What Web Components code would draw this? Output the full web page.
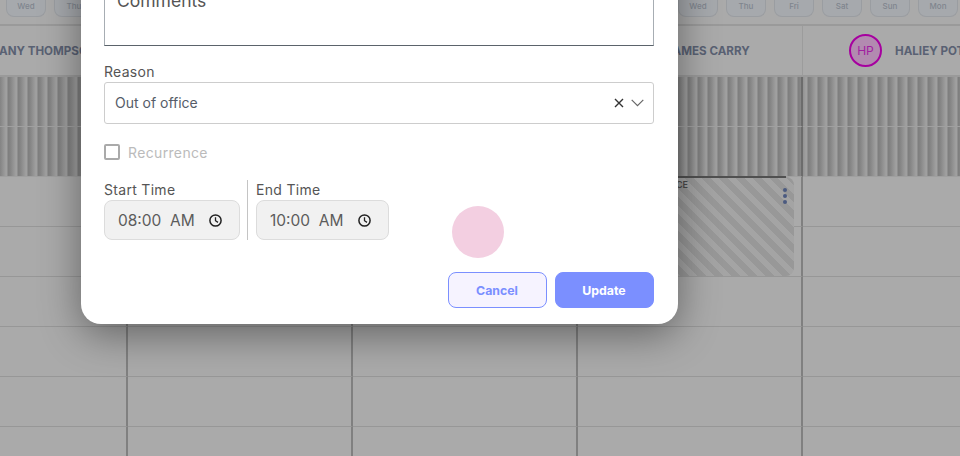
<!DOCTYPE html>
<html><head><meta charset="utf-8">
<style>
html,body{margin:0;padding:0;width:960px;height:456px;overflow:hidden;background:#aaa;font-family:Inter,"Liberation Sans",sans-serif}
</style></head><body>
<template id="t-day"><style>
:host{display:flex;align-items:center;justify-content:center;width:40px;height:17px;flex:none;box-sizing:border-box;padding-bottom:5px;background:#a6a9ad;border:1px solid #9a9da1;border-top:0;border-radius:0 0 8px 8px;font:500 8px Inter,sans-serif;color:#7f858e}
</style><slot></slot></template>

<template id="t-strip"><style>
:host{display:flex;height:26px;box-sizing:border-box;border-bottom:2px solid #9a9a9a;overflow:hidden}
.a,.b{display:flex;gap:8px}
.a{margin-left:6px;width:672px}
</style><div class="a"><slot name="l"></slot></div><div class="b"><slot name="r"></slot></div></template>

<template id="t-cell"><style>
:host{display:block;position:relative;box-sizing:border-box;height:50px;border-bottom:1px solid #979797;border-right:2px solid #808080}
:host([st]){border-bottom:1px solid #a0a0a0;border-right-color:#6c6c6c;background:linear-gradient(90deg,#a0a0a0 0,#a0a0a0 1px,#7e7e7e 2px,#838383 4px,#979797 8px,#a0a0a0 10px) 6px 0/10px 100% fixed}
</style><slot></slot></template>

<template id="t-col"><style>
:host{display:block;flex:none;box-sizing:border-box;width:225px}
:host([first]){width:128px}
.h{height:51px;box-sizing:border-box;border-bottom:2px solid #9a9a9a;border-right:1px solid #9c9c9c;display:flex;align-items:center;gap:13px;padding-left:46px;white-space:nowrap;overflow:hidden;font:700 11.6px Inter,sans-serif;color:#596173}
</style><div class="h"><slot name="head"></slot></div><slot></slot></template>

<template id="t-avatar"><style>
:host{display:flex;align-items:center;justify-content:center;flex:none;box-sizing:border-box;width:33px;height:33px;border:2px solid #a6009f;border-radius:50%;background:#b28ab0;color:#a11ea0;font:400 12px Inter,sans-serif}
</style><slot></slot></template>

<template id="t-event"><style>
:host{position:absolute;left:1px;top:0;width:215px;height:99px;box-sizing:border-box;border-radius:0 8px 8px 0;background:repeating-linear-gradient(45deg,#989898 0,#989898 6px,#a4a4a4 6px,#a4a4a4 12px);color:#4a4a4a;font:600 9px Inter,sans-serif}
.line{position:absolute;left:0;top:-1px;width:207px;height:2px;background:#505050}
.t{position:absolute;right:106px;top:2px;white-space:nowrap}
.d{position:absolute;left:204px;top:11px;display:flex;flex-direction:column;gap:2px}
i{display:block;width:4px;height:4px;border-radius:50%;background:#4b5a80}
</style><div class="line"></div><div class="t"><slot></slot></div><div class="d"><i></i><i></i><i></i></div></template>

<template id="t-field"><style>
:host{display:block;color:#555;font:400 14px/18px Inter,sans-serif;letter-spacing:.3px}
</style><slot></slot></template>

<template id="t-select"><style>
:host{display:flex;align-items:center;box-sizing:border-box;height:42px;margin-top:1px;padding:0 9px 0 10px;border:1px solid #cdcdcd;border-radius:3px;font:400 14px Inter,sans-serif;color:#555c68}
.s{flex:1;padding-bottom:2px}
svg{display:block;flex:none}
</style><div class="s"><slot></slot></div>
<svg width="10" height="10" viewBox="0 0 10 10" style="margin-right:7px"><path d="M1 1L9 9M9 1L1 9" stroke="#333" stroke-width="1.4" fill="none"/></svg>
<svg width="13" height="8" viewBox="0 0 13 8"><path d="M.7.8L6.5 6.6 12.3.8" stroke="#666" stroke-width="1.2" fill="none"/></svg></template>

<template id="t-time"><style>
:host{display:flex;align-items:center;justify-content:space-between;box-sizing:border-box;height:40px;background:#f1f1f1;border:1px solid #dcdcdc;border-radius:8px;font:400 15.5px Inter,sans-serif;color:#5c5c5c;white-space:nowrap}
svg{display:block;flex:none}
</style><slot></slot><svg width="15" height="15" viewBox="0 0 15 15"><circle cx="7.5" cy="7.5" r="5.6" fill="none" stroke="#222" stroke-width="1.5"/><path d="M7.5 4.2V7.7L10 9.4" fill="none" stroke="#222" stroke-width="1.3"/></svg></template>

<template id="t-btn"><style>
:host{display:flex;align-items:center;justify-content:center;box-sizing:border-box;width:99px;height:36px;border-radius:8px;font:700 12.3px Inter,sans-serif;background:#f6f3ff;border:1px solid #7b8fff;color:#7b8fff}
:host([primary]){background:#7b8fff;color:#fff}
</style><slot></slot></template>

<template id="t-modal"><style>
:host{position:absolute;left:81px;top:-100px;width:596.5px;height:424px;box-sizing:border-box;background:#fff;border-radius:0 0 20px 20px;box-shadow:0 10px 40px rgba(0,0,0,.42);padding:0 24px 0 23px;display:flex;flex-direction:column}
.body{flex:1;display:flex;flex-direction:column}
</style><div class="body"><slot></slot></div></template>

<template id="t-ripple"><style>
:host{position:absolute;left:452px;top:206px;width:52px;height:52px;border-radius:50%;background:#f3cfe1}
</style></template>

<s-strip>
<s-day slot="l">Wed</s-day><s-day slot="l">Thu</s-day>
<s-day slot="r">Wed</s-day><s-day slot="r">Thu</s-day><s-day slot="r">Fri</s-day><s-day slot="r">Sat</s-day><s-day slot="r">Sun</s-day><s-day slot="r">Mon</s-day>
</s-strip>
<div id="grid" style="display:flex">
<s-col first><span slot="head" style="margin-left:-47px">ANY THOMPSON</span>
<s-cell st></s-cell><s-cell st></s-cell><s-cell></s-cell><s-cell></s-cell><s-cell></s-cell><s-cell></s-cell><s-cell></s-cell><s-cell></s-cell></s-col>
<s-col><s-cell st></s-cell><s-cell st></s-cell><s-cell></s-cell><s-cell></s-cell><s-cell></s-cell><s-cell></s-cell><s-cell></s-cell><s-cell></s-cell></s-col>
<s-col><s-cell st></s-cell><s-cell st></s-cell><s-cell></s-cell><s-cell></s-cell><s-cell></s-cell><s-cell></s-cell><s-cell></s-cell><s-cell></s-cell></s-col>
<s-col><span slot="head" style="margin-left:42px">JAMES CARRY</span><s-cell st></s-cell><s-cell st></s-cell>
<s-cell><s-event>OUT OF OFFICE</s-event></s-cell><s-cell></s-cell><s-cell></s-cell><s-cell></s-cell><s-cell></s-cell><s-cell></s-cell></s-col>
<s-col><s-avatar slot="head">HP</s-avatar><span slot="head">HALIEY POTTER</span><s-cell st></s-cell><s-cell st></s-cell><s-cell></s-cell><s-cell></s-cell><s-cell></s-cell><s-cell></s-cell><s-cell></s-cell><s-cell></s-cell></s-col>
</div>
<s-modal>
<div style="height:52px;flex:none"></div>
<div style="height:94px;flex:none;box-sizing:border-box;border:1px solid #a7adb3;border-width:1px 1.5px;border-bottom-color:#5b636b;padding:37px 12px 0;font:400 17.5px/22px Inter,sans-serif;color:#555">Comments</div>
<s-field style="margin-top:17px">Reason</s-field>
<s-select>Out of office</s-select>
<div style="display:flex;align-items:center;gap:8px;margin-top:19px;height:18px;color:#bbb;font:400 14px Inter,sans-serif;letter-spacing:.35px"><span style="width:16px;height:16px;box-sizing:border-box;border:2px solid #aaa;border-radius:2px;flex:none"></span>Recurrence</div>
<div style="display:flex;margin-top:19px;height:60px">
<div style="width:143px;flex:none"><s-field style="padding-top:1px">Start Time</s-field><s-time style="margin-top:1px;width:136px;padding:0 16px 0 13px">08:00&nbsp;&nbsp;AM</s-time></div>
<div style="border-left:1px solid #c4c4c4;height:60px;flex:none"></div>
<div style="margin-left:8px;width:133px;flex:none"><s-field style="padding-top:1px">End Time</s-field><s-time style="margin-top:1px;padding:0 16px 0 13px">10:00&nbsp;&nbsp;AM</s-time></div>
</div>
<div style="display:flex;justify-content:flex-end;gap:8px;margin-top:32px"><s-btn>Cancel</s-btn><s-btn primary>Update</s-btn></div>
</s-modal>
<s-ripple></s-ripple>
<script>
for (const [tag,id] of [['s-day','t-day'],['s-strip','t-strip'],['s-cell','t-cell'],['s-col','t-col'],['s-avatar','t-avatar'],['s-event','t-event'],['s-field','t-field'],['s-select','t-select'],['s-time','t-time'],['s-btn','t-btn'],['s-modal','t-modal'],['s-ripple','t-ripple']]) {
  customElements.define(tag, class extends HTMLElement {
    constructor(){super();this.attachShadow({mode:'open'}).appendChild(document.getElementById(id).content.cloneNode(true));}
  });
}
</script>
</body></html>
